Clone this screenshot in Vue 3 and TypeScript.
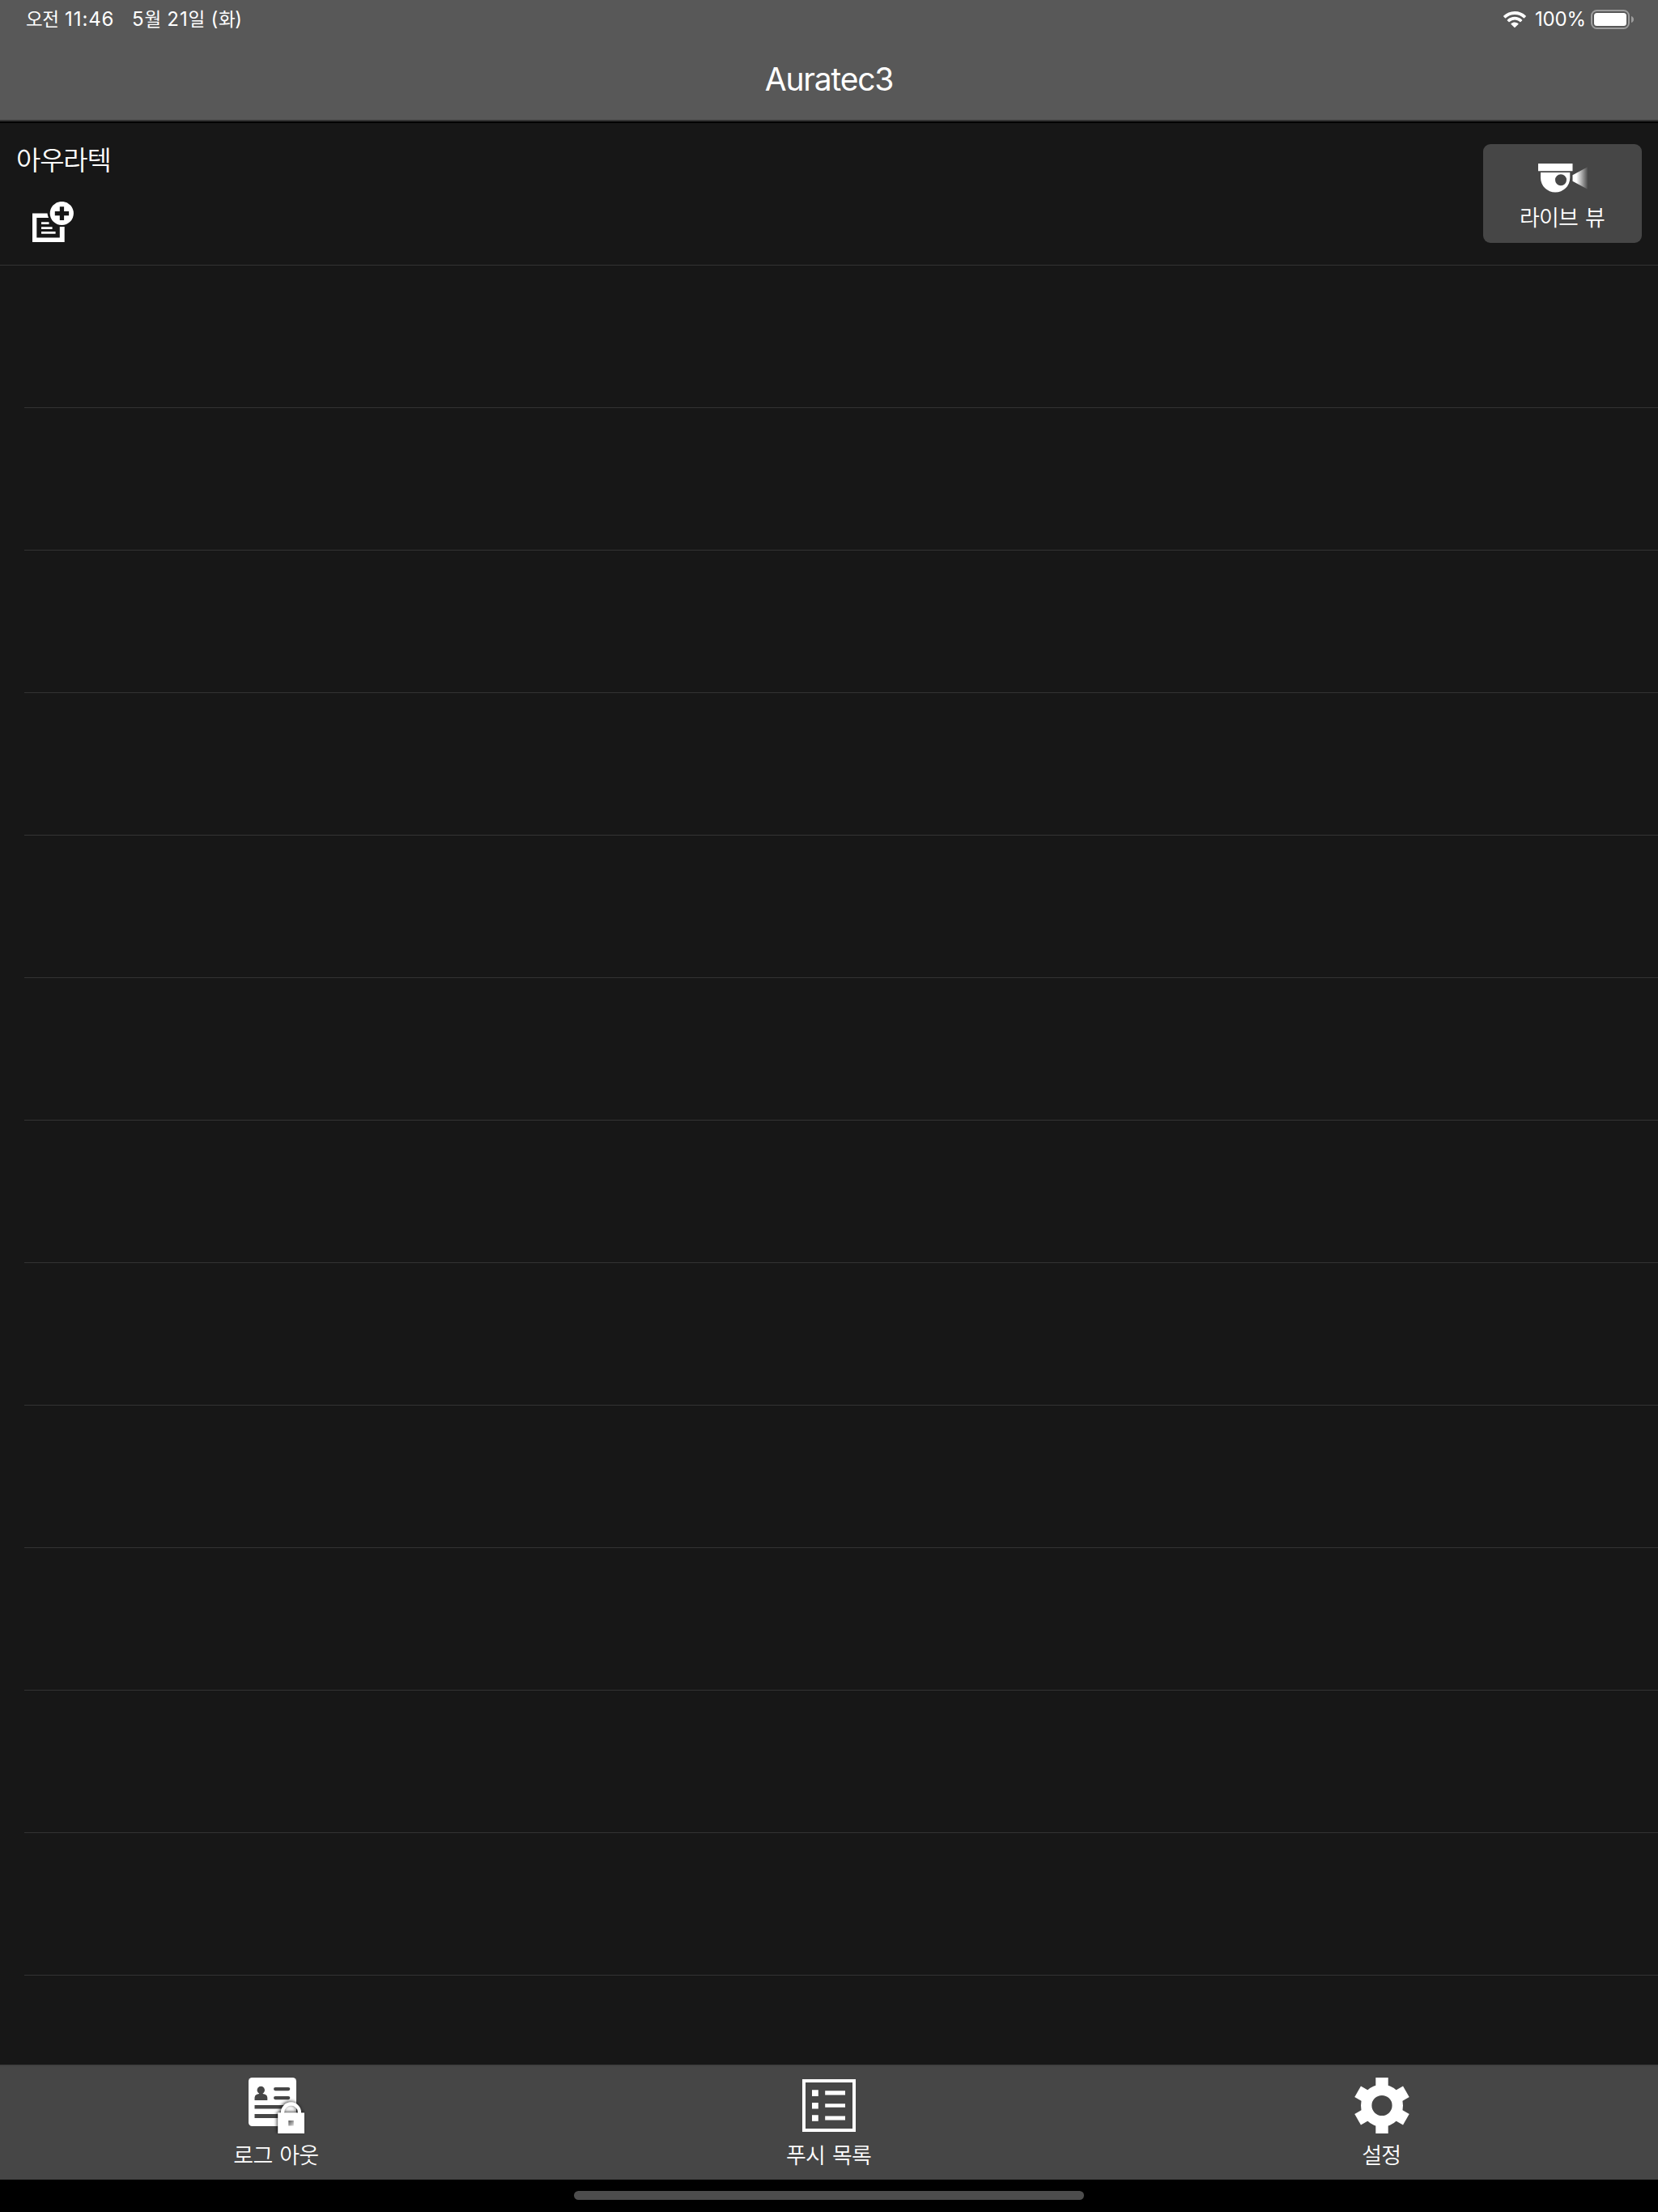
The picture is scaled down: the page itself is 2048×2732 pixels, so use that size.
<script setup lang="ts">
const emptyRows = Array.from({ length: 12 }, (_, i) => i)
</script>

<template>
  <div class="screen">
    <header class="header">
      <div class="status">
        <div class="status-left">
          <span class="time"><span class="ko">오전</span> 11:46</span>
          <span class="date">5<span class="ko">월</span> 21<span class="ko">일</span> (<span class="ko">화</span>)</span>
        </div>
        <div class="status-right">
          <svg class="wifi" width="28" height="20" viewBox="0 0 28 20">
            <path d="M14 0C8.600 0 3.800 2.100.3 5.500a.7.7 0 0 0 0 1l1.700 1.700a.7.7 0 0 0 1 0A16 16 0 0 1 14 3.900 16 16 0 0 1 25 8.200a.7.7 0 0 0 1 0l1.700-1.700a.7.7 0 0 0 0-1A19.600 19.600 0 0 0 14 0Z" />
            <path d="M14 6.800c-3.500 0-6.700 1.400-9.100 3.600a.7.7 0 0 0 0 1l1.700 1.700a.7.7 0 0 0 1 0A9.600 9.600 0 0 1 14 10.600c2.500 0 4.700.9 6.400 2.500a.7.7 0 0 0 1 0l1.700-1.700a.7.7 0 0 0 0-1A13.300 13.300 0 0 0 14 6.800Z" />
            <path d="M14 13.500c-1.700 0-3.200.6-4.400 1.600a.7.7 0 0 0 0 1l3.800 3.700c.3.300.8.300 1.100 0l3.900-3.700a.7.7 0 0 0 0-1A6.800 6.800 0 0 0 14 13.500Z" />
          </svg>
          <span class="percent">100%</span>
          <svg class="battery" width="53" height="24" viewBox="0 0 53 24">
            <rect x="1" y="1" width="46" height="22" rx="6.500" fill="none" stroke="#9d9d9d" stroke-width="2" />
            <rect x="4" y="4" width="40" height="16" rx="3.500" />
            <path d="M50 8c1.800.5 3 2 3 4s-1.200 3.500-3 4Z" fill="#9d9d9d" />
          </svg>
        </div>
      </div>
      <h1 class="title">Auratec3</h1>
    </header>

    <main class="list">
      <section class="row site">
        <div class="site-info">
          <span class="site-name">아우라텍</span>
          <svg class="note" width="52" height="51" viewBox="0 0 52 51">
            <path d="M0 14.500h18.500c.2 2 .7 3.800 1.500 5.500H5.300v24.500h28.500V31h5.900v19H0Z" />
            <path d="M11 25.300h9.500v2.600H11ZM11 31.200h13.600v2.700H11ZM11 37h17.600v2.800H11Z" />
            <circle cx="36.300" cy="14.500" r="14.600" />
            <path d="M33.800 6.300h5.300v5.700h6v5.200h-6v5.800h-5.300v-5.800h-6V12h6Z" fill="#171717" />
          </svg>
        </div>
        <button class="live" type="button">
          <svg class="camera" width="62" height="36" viewBox="0 0 62 36">
            <defs>
              <linearGradient id="beam" x1="0" x2="1">
                <stop offset=".25" stop-color="#fff" />
                <stop offset="1" stop-color="#464646" />
              </linearGradient>
            </defs>
            <path d="M0 0h42.500v9.300H0Z" />
            <path fill-rule="evenodd" d="M3 11h36.300v6.500a18.150 18 0 0 1-36.300 0ZM28 13.200a7 7 0 1 0 0 14 7 7 0 0 0 0-14Z" />
            <path d="M42.500 14.200 61.500 4v28L42.500 21.700Z" fill="url(#beam)" />
          </svg>
          <span class="live-label">라이브 뷰</span>
        </button>
      </section>
      <div v-for="row in emptyRows" :key="row" class="row empty"></div>
    </main>

    <nav class="tabs">
      <div class="tab">
        <svg class="icon logout" width="70" height="70" viewBox="0 0 70 70">
          <defs>
            <filter id="shade" x="-40%" y="-40%" width="180%" height="180%">
              <feDropShadow dx="-1" dy="-1" stdDeviation="2" flood-color="#000" flood-opacity=".8" />
            </filter>
            <clipPath id="card"><path d="M0 0h59v27H70v43H31v-9H0Z" /></clipPath>
            <linearGradient id="key" x1="0" y1="0" x2="1" y2="1">
              <stop offset="0" stop-color="#555" />
              <stop offset="1" stop-color="#ddd" />
            </linearGradient>
          </defs>
          <rect width="59" height="60" rx="4.500" />
          <g fill="#464646">
            <circle cx="15.300" cy="15.500" r="4.700" />
            <path d="M13 18h4.600v2l3 .8q2.600 1.200 2.700 4V28H7.500v-3.200q.1-2.800 2.700-4l2.800-.8Z" />
            <rect x="31" y="12" width="20.300" height="4.200" rx="2.100" />
            <rect x="31" y="23" width="20.300" height="4.200" rx="2.100" />
            <path d="M7.500 34H45v4.600H7.500ZM7.500 45H37v5H7.500Z" />
          </g>
          <g clip-path="url(#card)">
            <g filter="url(#shade)">
              <path d="M36.300 43.500H69V69H36.300Z" />
              <path d="M42 45v-2a10.500 10.500 0 0 1 21 0v2" fill="none" stroke="#fff" stroke-width="4" />
            </g>
          </g>
          <path d="M49.300 53h6.500v6.500h-6.500Z" fill="url(#key)" />
        </svg>
        <span class="tab-label">로그 아웃</span>
      </div>
      <div class="tab">
        <svg class="icon" width="70" height="70" viewBox="0 0 70 70">
          <rect x="4" y="4" width="62" height="61" fill="none" stroke="#fff" stroke-width="4" />
          <path d="M14 15.200h7.800V23H14ZM14 31h7.800v7.500H14ZM14 46.300h7.800v7.400H14ZM30.200 16.200H55v5.300H30.200ZM30.200 32.200H55v4.600H30.200ZM30.200 47.500H55v5H30.200Z" />
        </svg>
        <span class="tab-label">푸시 목록</span>
      </div>
      <div class="tab">
        <svg class="icon" width="70" height="70" viewBox="0 0 70 70">
          <circle cx="35" cy="34.500" r="19.300" fill="none" stroke="#fff" stroke-width="13.400" />
          <g>
            <path v-for="a in 6" :key="a" d="M27.300 0h15.400v12H27.300Z" :transform="`rotate(${a * 60} 35 34.500)`" />
          </g>
        </svg>
        <span class="tab-label">설정</span>
      </div>
    </nav>

    <footer class="home"><div class="indicator"></div></footer>
  </div>
</template>

<style>
body {
  margin: 0;
  background: #000;
}
</style>

<style scoped>
.screen {
  width: 2048px;
  height: 2732px;
  display: flex;
  flex-direction: column;
  overflow: hidden;
  background: #171717;
  color: #fff;
  font-family: Inter, 'Noto Sans CJK KR', sans-serif;
}
svg {
  display: block;
  fill: #fff;
  flex: none;
}
span {
  white-space: pre;
}
.header {
  box-sizing: border-box;
  height: 152px;
  flex: none;
  background: #585858;
  border-bottom: 2px solid #000;
  box-shadow: inset 0 -2px #333;
}
.status {
  height: 48px;
  display: flex;
  justify-content: space-between;
  font-size: 24px;
  line-height: 48px;
  font-weight: 400;
}
.status-left {
  display: flex;
  padding-left: 32px;
  letter-spacing: 0.9px;
}
.time {
  width: 131px;
}
.ko {
  font-size: 22.500px;
  font-weight: 400;
  letter-spacing: -0.5px;
}
.status-right {
  display: flex;
  align-items: center;
  padding-right: 30px;
}
.percent {
  width: 61px;
  margin: 0 8px 0 11px;
  letter-spacing: -0.2px;
}
.title {
  margin: 0;
  height: 100px;
  line-height: 100px;
  text-align: center;
  font-size: 39px;
  font-weight: 400;
  letter-spacing: -1.2px;
}
.list {
  flex: 1;
  min-height: 0;
  overflow: hidden;
}
.row {
  box-sizing: border-box;
  height: 176px;
  border-bottom: 1px solid #333;
}
.empty {
  margin-left: 30px;
}
.site {
  display: flex;
  justify-content: space-between;
  padding: 26px 20px 0;
}
.site-info {
  display: flex;
  flex-direction: column;
}
.site-name {
  font-size: 33px;
  line-height: 40px;
  letter-spacing: -1.2px;
  font-weight: 350;
}
.note {
  margin: 31px 0 0 20px;
}
.live {
  width: 196px;
  height: 122px;
  padding: 24px 0 0;
  border: 0;
  border-radius: 9px;
  background: #464646;
  color: #fff;
  font-family: inherit;
  display: flex;
  flex-direction: column;
  align-items: center;
}
.camera {
  margin-left: 2px;
}
.live-label,
.tab-label {
  font-size: 27px;
  line-height: 36px;
  letter-spacing: -0.8px;
  word-spacing: 2px;
  font-weight: 350;
}
.live-label {
  margin: 14px 1px 0 0;
}
.tabs {
  box-sizing: border-box;
  height: 142px;
  flex: none;
  display: flex;
  background: #464646;
  border-top: 2px solid #404040;
}
.tab {
  flex: 1;
  display: flex;
  flex-direction: column;
  align-items: center;
  padding-top: 14px;
}
.logout {
  margin-left: 1.300px;
}
.tab-label {
  margin: 9px 1px 0 0;
}
.home {
  height: 40px;
  flex: none;
  background: #000;
  display: flex;
  justify-content: center;
  align-items: flex-start;
}
.indicator {
  width: 630px;
  height: 11px;
  margin-top: 14px;
  border-radius: 6px;
  background: #4d4d4d;
}
</style>
